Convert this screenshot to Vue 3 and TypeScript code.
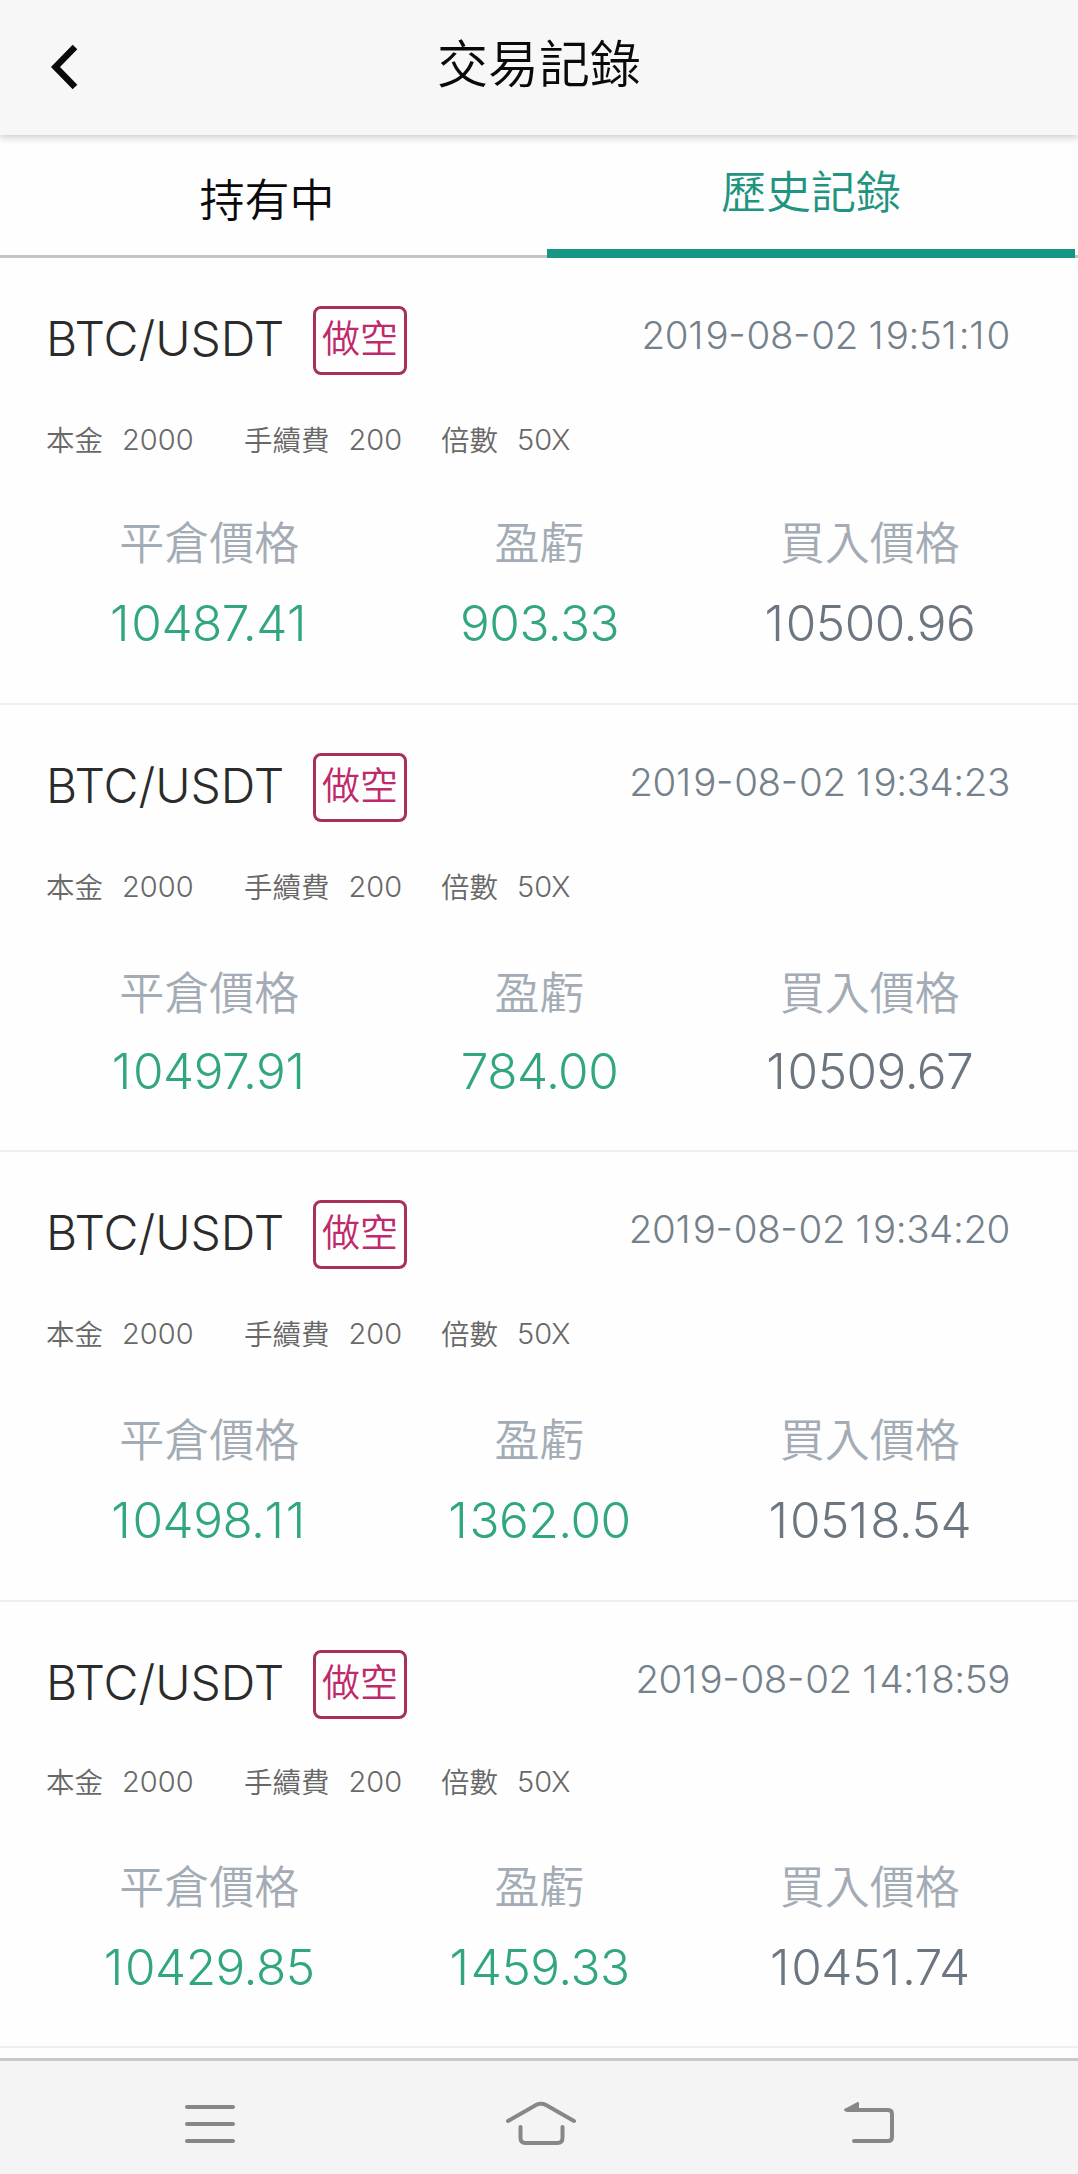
<script setup lang="ts">
import { h } from 'vue'

interface TradeRecord {
  pair: string
  side: string
  time: string
  principal: string
  fee: string
  leverage: string
  closePrice: string
  profit: string
  buyPrice: string
}

const base = { pair: 'BTC/USDT', side: '做空', principal: '2000', fee: '200', leverage: '50X' }

const records: TradeRecord[] = [
  { ...base, time: '2019-08-02 19:51:10', closePrice: '10487.41', profit: '903.33', buyPrice: '10500.96' },
  { ...base, time: '2019-08-02 19:34:23', closePrice: '10497.91', profit: '784.00', buyPrice: '10509.67' },
  { ...base, time: '2019-08-02 19:34:20', closePrice: '10498.11', profit: '1362.00', buyPrice: '10518.54' },
  { ...base, time: '2019-08-02 14:18:59', closePrice: '10429.85', profit: '1459.33', buyPrice: '10451.74' },
]

// Gives narrow ones and date hyphens their own spacing class.
const Digits = (props: { text: string }) =>
  h(
    'span',
    { class: 'digits' },
    props.text
      .split(/([1-])/)
      .filter(Boolean)
      .map((part) => (part === '1' ? h('i', { class: 'one' }, part) : part === '-' ? h('i', { class: 'dash' }, part) : part)),
  )
Digits.props = ['text']
</script>

<template>
  <div class="screen">
    <header class="header">
      <svg class="back" width="30" height="48" viewBox="0 0 30 48">
        <path d="M25 4 5.500 24 25 44" fill="none" stroke="#0a0a0a" stroke-width="6.5" />
      </svg>
      <h1 class="title">交易記錄</h1>
    </header>

    <nav class="tabs">
      <div class="tab">持有中</div>
      <div class="tab active">歷史記錄</div>
    </nav>

    <main class="list">
      <section v-for="r in records" :key="r.time" class="card">
        <div class="head">
          <span class="pair">{{ r.pair }}</span>
          <span class="badge">{{ r.side }}</span>
          <span class="time"><Digits :text="r.time" /></span>
        </div>
        <div class="info">
          <span class="item principal">本金<b>{{ r.principal }}</b></span>
          <span class="item fee">手續費<b>{{ r.fee }}</b></span>
          <span class="item">倍數<b>{{ r.leverage }}</b></span>
        </div>
        <div class="labels">
          <span>平倉價格</span>
          <span>盈虧</span>
          <span>買入價格</span>
        </div>
        <div class="values">
          <span class="up"><Digits :text="r.closePrice" /></span>
          <span class="up"><Digits :text="r.profit" /></span>
          <span><Digits :text="r.buyPrice" /></span>
        </div>
      </section>
    </main>

    <footer class="sysbar">
      <svg width="54" height="48" viewBox="0 0 54 48">
        <path d="M4 7H50M4 24H50M4 41H50" />
      </svg>
      <svg class="home" width="74" height="48" viewBox="0 0 74 48">
        <path d="M4 21 32 5Q37 2.500 42 5L70 21M16.500 27V38Q16.500 43 21.500 43H53.500Q58.500 43 58.500 38V27" />
      </svg>
      <svg width="54" height="48" viewBox="0 0 54 48">
        <path d="M6 10H47Q51 10 51 14V37Q51 41 47 41H13" />
        <path class="tip" d="M4 10 17 3V10Z" />
      </svg>
    </footer>
  </div>
</template>

<style>
body {
  background: #fefefe;
}
</style>

<style scoped>
.screen {
  width: 1078px;
  height: 2174px;
  display: flex;
  flex-direction: column;
  overflow: hidden;
  background: #fefefe;
  font-family: "Noto Sans CJK TC", sans-serif;
  font-weight: 350;
}

.header {
  box-sizing: border-box;
  height: 135px;
  flex: none;
  display: grid;
  grid-template-columns: 120px 1fr 120px;
  align-items: start;
  background: #f7f7f7;
  box-shadow: 0 1px 8px 1px rgba(0, 0, 0, 0.22);
  z-index: 1;
}

.back {
  margin: 43px 0 0 50px;
}

.title {
  margin: 31px 0 0;
  text-align: center;
  font-size: 51px;
  line-height: 60px;
  font-weight: 350;
  color: #0a0a0a;
}

.tabs {
  height: 123px;
  flex: none;
  display: flex;
  padding-right: 3px;
  background: linear-gradient(#c4c4c4, #c4c4c4) bottom / 100% 3px no-repeat;
}

.tab {
  box-sizing: border-box;
  width: 547px;
  padding: 38px 13px 0 0;
  text-align: center;
  font-size: 45px;
  line-height: 50px;
  color: #0a0a0a;
}

.tab.active {
  width: 528px;
  padding: 30px 0 0;
  border-bottom: 9px solid #169683;
  color: #1f9580;
}

.list {
  height: 1800px;
  flex: none;
}

.card {
  box-sizing: border-box;
  height: 447px;
  padding: 48px 43px 0 46px;
  border-bottom: 2px solid #eee;
}

.head {
  display: flex;
  height: 70px;
}

.pair {
  width: 267px;
  font: 300 48px/65px Inter, sans-serif;
  color: #2b2b2b;
}

.badge {
  box-sizing: border-box;
  width: 94px;
  height: 69px;
  border: 3px solid #a93058;
  border-radius: 8px;
  text-align: center;
  font-size: 38px;
  line-height: 54px;
  color: #c0296b;
}

.time {
  margin-left: auto;
  padding-right: 25px;
  font: 300 38.500px/59px Inter, sans-serif;
  letter-spacing: -0.4px;
  color: #74808a;
}

:deep(.one),
:deep(.dash) {
  font-style: normal;
}

.time :deep(.one) {
  letter-spacing: 2.2px;
}

.time :deep(.dash) {
  letter-spacing: 0.8px;
  font-feature-settings: "case";
}

.info {
  display: flex;
  margin-top: 43px;
  height: 40px;
  font-size: 28.500px;
  line-height: 40px;
  color: #686868;
}

.item {
  display: flex;
}

.item b {
  margin-left: 19px;
  font: 300 29px/42px Inter, sans-serif;
}

.principal {
  width: 198px;
}

.fee {
  width: 197px;
}

.labels,
.values {
  display: grid;
  grid-template-columns: repeat(3, 1fr);
  margin-left: -2px;
  text-align: center;
}

.labels {
  margin-top: 52px;
  height: 60px;
  font-size: 45px;
  line-height: 60px;
  color: #a3acb5;
}

.values {
  margin-top: 22px;
  font: 300 49.500px/60px Inter, sans-serif;
  letter-spacing: -0.5px;
  color: #6c7680;
}

.values :deep(.one) {
  letter-spacing: 1.8px;
}

.up {
  color: #31a680;
}

.card:nth-child(2) .labels,
.card:nth-child(3) .labels {
  margin-top: 55px;
}

.card:nth-child(2) .values {
  margin-top: 20px;
}

.card:nth-child(3) {
  height: 450px;
}

.card:nth-child(4) {
  height: 446px;
}

.card:nth-child(4) .info {
  margin-top: 41px;
}

.card:nth-child(4) .labels {
  margin-top: 54px;
}

.sysbar {
  box-sizing: border-box;
  height: 116px;
  flex: none;
  display: flex;
  justify-content: space-between;
  padding: 39px 183px 0 183px;
  border-top: 3px solid #c9c9c9;
  background: #f4f4f4;
}

.home {
  margin-left: 3px;
}

.sysbar path {
  fill: none;
  stroke: #878787;
  stroke-width: 4;
  stroke-linecap: round;
}

.sysbar .tip {
  fill: #878787;
  stroke-width: 2;
  stroke-linejoin: round;
}
</style>
